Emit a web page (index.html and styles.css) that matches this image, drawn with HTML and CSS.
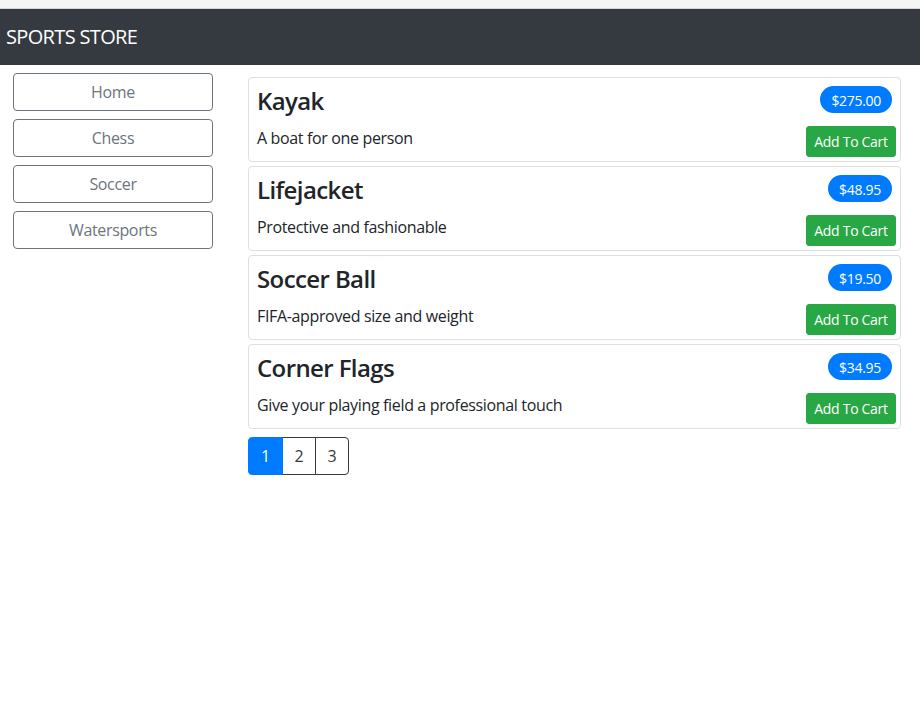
FILE: index.html
```html
<!DOCTYPE html>
<html lang="en">
<head>
<meta charset="utf-8">
<title>Sports Store</title>
<link rel="stylesheet" href="styles.css">
</head>
<body>
<div class="topstrip"></div>
<header class="navbar"><span class="brand">SPORTS STORE</span></header>
<div class="layout">
  <nav class="sidebar">
    <button class="cat">Home</button>
    <button class="cat">Chess</button>
    <button class="cat">Soccer</button>
    <button class="cat">Watersports</button>
  </nav>
  <main class="products">
    <div class="card">
      <div class="card-head"><h4 class="name">Kayak</h4><span class="price">$275.00</span></div>
      <div class="card-body"><p class="desc">A boat for one person</p><button class="add">Add To Cart</button></div>
    </div>
    <div class="card">
      <div class="card-head"><h4 class="name">Lifejacket</h4><span class="price">$48.95</span></div>
      <div class="card-body"><p class="desc">Protective and fashionable</p><button class="add">Add To Cart</button></div>
    </div>
    <div class="card">
      <div class="card-head"><h4 class="name">Soccer Ball</h4><span class="price">$19.50</span></div>
      <div class="card-body"><p class="desc">FIFA-approved size and weight</p><button class="add">Add To Cart</button></div>
    </div>
    <div class="card">
      <div class="card-head"><h4 class="name">Corner Flags</h4><span class="price">$34.95</span></div>
      <div class="card-body"><p class="desc">Give your playing field a professional touch</p><button class="add">Add To Cart</button></div>
    </div>
    <div class="pager">
      <button class="page active">1</button>
      <button class="page">2</button>
      <button class="page">3</button>
    </div>
  </main>
</div>
</body>
</html>
```
FILE: styles.css
```css
* { box-sizing: border-box; }
html, body { margin: 0; padding: 0; background: #fff; }
body {
  font-family: "Open Sans", "Noto Sans", sans-serif;
  color: #212529;
  font-size: 16px;
  line-height: 1.5;
  letter-spacing: -0.35px;
}
.topstrip {
  height: 9px;
  background: #f5f5f5;
  border-bottom: 1px solid #d6d6d6;
}
.navbar {
  height: 56px;
  background: #343a40;
  display: flex;
  align-items: center;
  padding-left: 6px;
}
.brand {
  color: #fff;
  font-size: 20px;
  line-height: 30px;
  letter-spacing: -0.65px;
}
.layout {
  display: flex;
  align-items: flex-start;
}
.sidebar {
  width: 213px;
  padding: 8px 0 0 13px;
  display: flex;
  flex-direction: column;
  gap: 8px;
}
.cat {
  width: 200px;
  height: 38px;
  background: #fff;
  border: 1px solid #6c757d;
  border-radius: 4px;
  color: #6c757d;
  font: inherit;
  font-size: 16px;
  line-height: 24px;
  letter-spacing: -0.35px;
  padding: 6px 12px 6px;
  text-align: center;
}
.products {
  margin-left: 35px;
  width: 653px;
  padding-top: 12px;
  display: flex;
  flex-direction: column;
  gap: 4px;
}
.card {
  border: 1px solid #dfdfdf;
  border-radius: 4px;
  padding: 4px;
  height: 85px;
}
.card-head {
  display: flex;
  justify-content: space-between;
  align-items: flex-start;
  padding: 4px 4px 0 4px;
  margin-bottom: 10.2px;
}
.name {
  margin: 0;
  padding-top: 1px;
  font-size: 24px;
  line-height: 28.8px;
  font-weight: 600;
  letter-spacing: -0.6px;
}
.price {
  background: #007bff;
  color: #fff;
  font-size: 14px;
  height: 27px;
  line-height: 30px;
  padding: 0 11px;
  border-radius: 14px;
  letter-spacing: -0.3px;
}
.card-body {
  display: flex;
  justify-content: space-between;
  align-items: flex-start;
  padding-left: 4px;
}
.desc {
  margin: 0;
  font-size: 16px;
  line-height: 24px;
}
.add {
  background: #28a745;
  border: 1px solid #28a745;
  color: #fff;
  font: inherit;
  font-size: 14px;
  line-height: 21px;
  letter-spacing: -0.3px;
  white-space: nowrap;
  padding: 4px 0;
  border-radius: 3px;
  height: 31px;
  width: 90px;
  text-align: center;
}
.pager {
  display: flex;
  margin-top: 4px;
}
.page {
  width: 34px;
  height: 38px;
  background: #fff;
  border: 1px solid #343a40;
  color: #343a40;
  font: inherit;
  font-size: 16px;
  line-height: 24px;
  padding: 6px 0;
  text-align: center;
  border-radius: 0;
}
.page + .page { margin-left: -1px; }
.page:first-child { border-radius: 4px 0 0 4px; }
.page:last-child { border-radius: 0 4px 4px 0; }
.page.active {
  width: 35px;
  background: #007bff;
  border-color: #007bff;
  color: #fff;
  position: relative;
  z-index: 1;
}
```
